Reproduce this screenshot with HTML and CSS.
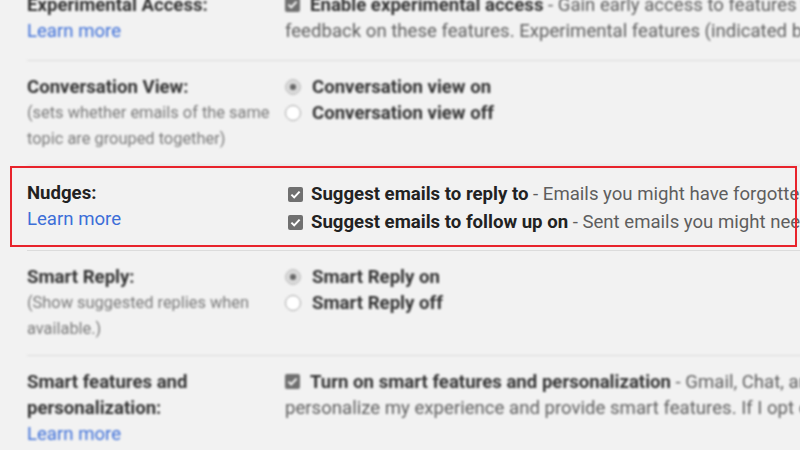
FILE: index.html
```html
<!DOCTYPE html>
<html lang="en">
<head>
    <meta charset="UTF-8">
    <title>Settings - General</title>
    <link rel="stylesheet" href="styles.css">
</head>
<body>
    <div class="settings">
        <div class="row blurred">
            <div class="label">
                <div class="title">Experimental Access:</div>
                <a class="link" href="#">Learn more</a>
            </div>
            <div class="value">
                <span class="box"><svg width="15" height="15" viewBox="0 0 15 15"><rect width="15" height="15" rx="2" fill="#707070"/><path d="M3.4 7.6 6.2 10.4 11.6 4.6" fill="none" stroke="#fff" stroke-width="2"/></svg></span><b>Enable experimental access</b> - Gain early access to features that are still in development. Google may ask for your feedback on these features. Experimental features (indicated by a flask icon) may change or be discontinued.
            </div>
        </div>

        <div class="row blurred">
            <div class="label">
                <div class="title">Conversation View:</div>
                <div class="hint">(sets whether emails of the same topic are grouped together)</div>
            </div>
            <div class="value">
                <label class="option"><span class="radio on"></span><b>Conversation view on</b></label>
                <label class="option"><span class="radio"></span><b>Conversation view off</b></label>
            </div>
        </div>

        <div class="row highlight">
            <div class="frame"></div>
            <div class="label">
                <div class="title">Nudges:</div>
                <a class="link" href="#">Learn more</a>
            </div>
            <div class="value">
                <label class="option check"><span class="box"><svg width="15" height="15" viewBox="0 0 15 15"><rect width="15" height="15" rx="2" fill="#707070"/><path d="M3.4 7.6 6.2 10.4 11.6 4.6" fill="none" stroke="#fff" stroke-width="2"/></svg></span><span><b>Suggest emails to reply to</b> - Emails you might have forgotten to respond to will appear at the top of your inbox</span></label>
                <label class="option check"><span class="box"><svg width="15" height="15" viewBox="0 0 15 15"><rect width="15" height="15" rx="2" fill="#707070"/><path d="M3.4 7.6 6.2 10.4 11.6 4.6" fill="none" stroke="#fff" stroke-width="2"/></svg></span><span><b>Suggest emails to follow up on</b> - Sent emails you might need to follow up on will appear at the top of your inbox</span></label>
            </div>
        </div>

        <div class="row blurred">
            <div class="label">
                <div class="title">Smart Reply:</div>
                <div class="hint">(Show suggested replies when available.)</div>
            </div>
            <div class="value">
                <label class="option"><span class="radio on"></span><b>Smart Reply on</b></label>
                <label class="option"><span class="radio"></span><b>Smart Reply off</b></label>
            </div>
        </div>

        <div class="row blurred">
            <div class="label">
                <div class="title">Smart features and personalization:</div>
                <a class="link" href="#">Learn more</a>
            </div>
            <div class="value">
                <span class="box"><svg width="15" height="15" viewBox="0 0 15 15"><rect width="15" height="15" rx="2" fill="#707070"/><path d="M3.4 7.6 6.2 10.4 11.6 4.6" fill="none" stroke="#fff" stroke-width="2"/></svg></span><b>Turn on smart features and personalization</b> - Gmail, Chat, and Meet may use my email, chat, and video content to personalize my experience and provide smart features. If I opt out, such features will be turned off.
            </div>
        </div>
    </div>
</body>
</html>
```

FILE: styles.css
```css
body {
    margin: 0;
    background-color: #f2f2f2;
    font-family: Roboto, "Liberation Sans", Arial, sans-serif;
    font-size: 18.6px;
    line-height: 26px;
    color: #222;
    overflow: hidden;
}
.settings {
    margin: -21px 0 0 27px;
    width: 1250px;
}
.row {
    display: grid;
    grid-template-columns: 258px 1fr;
    padding: 13px 0;
    border-bottom: 1px solid #dcdcdc;
}
.row:first-child {
    padding-bottom: 16px;
}
.blurred {
    filter: blur(0.9px);
    color: #333;
}
.highlight {
    position: relative;
    padding: 14px 0;
}
.frame {
    position: absolute;
    left: -17px;
    top: 0;
    width: 787px;
    height: 81px;
    border: 2px solid #e8232b;
    box-sizing: border-box;
}
.title {
    font-weight: bold;
    padding-right: 4px;
}
.hint {
    font-size: 16.4px;
    color: #7a7a7a;
    padding-right: 4px;
}
.link {
    display: block;
    color: #3d6fd8;
    text-decoration: none;
}
.value {
    color: #5e5e5e;
}
.value b {
    color: #333;
}
.highlight .value b {
    color: #222;
}
.box {
    display: inline-block;
    width: 15px;
    height: 15px;
    margin-right: 10px;
    vertical-align: -1px;
}
.box svg {
    display: block;
}
.option {
    display: flex;
    align-items: center;
    gap: 11px;
    height: 26px;
    white-space: nowrap;
}
.option.check {
    height: 28px;
    gap: 0;
}
.option.check .box {
    margin-left: 3px;
    margin-right: 8px;
}
.radio {
    width: 16px;
    height: 16px;
    border-radius: 50%;
    border: 1px solid #a8a8a8;
    background-color: #fff;
    box-sizing: border-box;
    display: flex;
    align-items: center;
    justify-content: center;
}
.radio.on {
    background-color: #d9d9d9;
    border-color: #bdbdbd;
}
.radio.on::after {
    content: "";
    width: 6px;
    height: 6px;
    border-radius: 50%;
    background-color: #666;
}
```
